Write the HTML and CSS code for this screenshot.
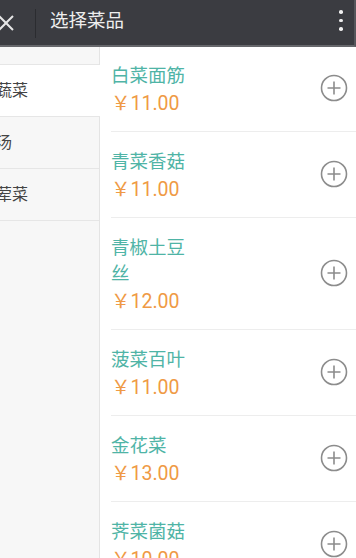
FILE: index.html
```html
<!DOCTYPE html>
<html lang="zh">
<head>
<meta charset="utf-8">
<link rel="stylesheet" href="styles.css">
</head>
<body>
<div class="app">
  <header class="topbar">
    <div class="close">
      <svg width="20" height="20" viewBox="0 0 20 20"><path d="M-1 2 L13 16 M13 2 L-1 16" stroke="#e6e6e6" stroke-width="2" fill="none"/></svg>
    </div>
    <div class="sep"></div>
    <div class="title">选择菜品</div>
    <div class="more"><span></span><span></span><span></span></div>
  </header>
  <main class="body">
    <nav class="cats">
      <div class="cat">推荐</div>
      <div class="cat active">蔬菜</div>
      <div class="cat">汤</div>
      <div class="cat">荤菜</div>
    </nav>
    <section class="dishes">
      <div class="dish">
        <div class="info"><div class="name">白菜面筋</div><div class="price">￥11.00</div></div>
        <div class="add"><svg width="28" height="28" viewBox="0 0 28 28"><circle cx="14" cy="14" r="12.5" stroke="#8c8c8c" stroke-width="1.6" fill="none"/><path d="M7.5 14 H20.5 M14 7.5 V20.5" stroke="#8c8c8c" stroke-width="1.6"/></svg></div>
      </div>
      <div class="dish">
        <div class="info"><div class="name">青菜香菇</div><div class="price">￥11.00</div></div>
        <div class="add"><svg width="28" height="28" viewBox="0 0 28 28"><circle cx="14" cy="14" r="12.5" stroke="#8c8c8c" stroke-width="1.6" fill="none"/><path d="M7.5 14 H20.5 M14 7.5 V20.5" stroke="#8c8c8c" stroke-width="1.6"/></svg></div>
      </div>
      <div class="dish">
        <div class="info"><div class="name">青椒土豆丝</div><div class="price">￥12.00</div></div>
        <div class="add"><svg width="28" height="28" viewBox="0 0 28 28"><circle cx="14" cy="14" r="12.5" stroke="#8c8c8c" stroke-width="1.6" fill="none"/><path d="M7.5 14 H20.5 M14 7.5 V20.5" stroke="#8c8c8c" stroke-width="1.6"/></svg></div>
      </div>
      <div class="dish">
        <div class="info"><div class="name">菠菜百叶</div><div class="price">￥11.00</div></div>
        <div class="add"><svg width="28" height="28" viewBox="0 0 28 28"><circle cx="14" cy="14" r="12.5" stroke="#8c8c8c" stroke-width="1.6" fill="none"/><path d="M7.5 14 H20.5 M14 7.5 V20.5" stroke="#8c8c8c" stroke-width="1.6"/></svg></div>
      </div>
      <div class="dish">
        <div class="info"><div class="name">金花菜</div><div class="price">￥13.00</div></div>
        <div class="add"><svg width="28" height="28" viewBox="0 0 28 28"><circle cx="14" cy="14" r="12.5" stroke="#8c8c8c" stroke-width="1.6" fill="none"/><path d="M7.5 14 H20.5 M14 7.5 V20.5" stroke="#8c8c8c" stroke-width="1.6"/></svg></div>
      </div>
      <div class="dish">
        <div class="info"><div class="name">荠菜菌菇</div><div class="price">￥10.00</div></div>
        <div class="add"><svg width="28" height="28" viewBox="0 0 28 28"><circle cx="14" cy="14" r="12.5" stroke="#8c8c8c" stroke-width="1.6" fill="none"/><path d="M7.5 14 H20.5 M14 7.5 V20.5" stroke="#8c8c8c" stroke-width="1.6"/></svg></div>
      </div>
    </section>
  </main>
</div>
</body>
</html>
```
FILE: styles.css
```css
html, body {
  margin: 0;
  padding: 0;
  background: #fff;
}
body {
  width: 356px;
  height: 558px;
  overflow: hidden;
  font-family: Roboto, "Noto Sans CJK SC", sans-serif;
}
.app {
  display: flex;
  flex-direction: column;
  height: 558px;
}
.topbar {
  flex: 0 0 auto;
  height: 45px;
  background: #3b3c41;
  border-bottom: 2px solid #66676b;
  border-right: 2px solid #55565b;
  display: flex;
  align-items: center;
}
.close {
  width: 20px;
  height: 20px;
  margin-left: 0;
  margin-top: 2px;
  display: flex;
}
.sep {
  width: 1px;
  height: 29px;
  background: #2b2c30;
  margin-left: 15px;
  margin-top: 1px;
}
.title {
  margin-left: 14px;
  color: #eeeeee;
  font-size: 18.5px;
  line-height: 26px;
  margin-top: -3px;
  flex: 1;
}
.more {
  width: 4px;
  margin-right: 11px;
  display: flex;
  flex-direction: column;
  gap: 5px;
  margin-top: -4px;
}
.more span {
  width: 3.5px;
  height: 3.5px;
  border-radius: 50%;
  background: #f0f0f0;
}
.body {
  flex: 1;
  display: flex;
  min-height: 0;
}
.cats {
  width: 100px;
  flex: 0 0 100px;
  background: #f7f7f7;
  box-shadow: inset -1px 0 #e4e4e4;
  overflow: hidden;
}
.cat {
  height: 51px;
  border-bottom: 1px solid #e6e6e6;
  margin-right: 1px;
  font-size: 16px;
  line-height: 51px;
  color: #444;
  text-indent: -4px;
  white-space: nowrap;
}
.cat:first-child {
  margin-top: -34px;
}
.cat.active {
  background: #fff;
  margin-right: 0;
}
.dishes {
  flex: 1;
  overflow: hidden;
  background: #fff;
}
.dish {
  margin-left: 11px;
  padding: 17px 0 14px;
  border-bottom: 1px solid #ededed;
  display: flex;
  align-items: center;
  justify-content: space-between;
}
.dish:first-child {
  margin-top: -1px;
}
.info {
  width: 80px;
  display: flex;
  flex-direction: column;
  gap: 2px;
}
.name {
  font-size: 18.5px;
  line-height: 26px;
  color: #4fb4a6;
}
.price {
  font-size: 19.5px;
  line-height: 26px;
  color: #ef9a45;
}
.add {
  width: 28px;
  height: 28px;
  margin-right: 8px;
  margin-bottom: 4px;
  display: flex;
}
```
